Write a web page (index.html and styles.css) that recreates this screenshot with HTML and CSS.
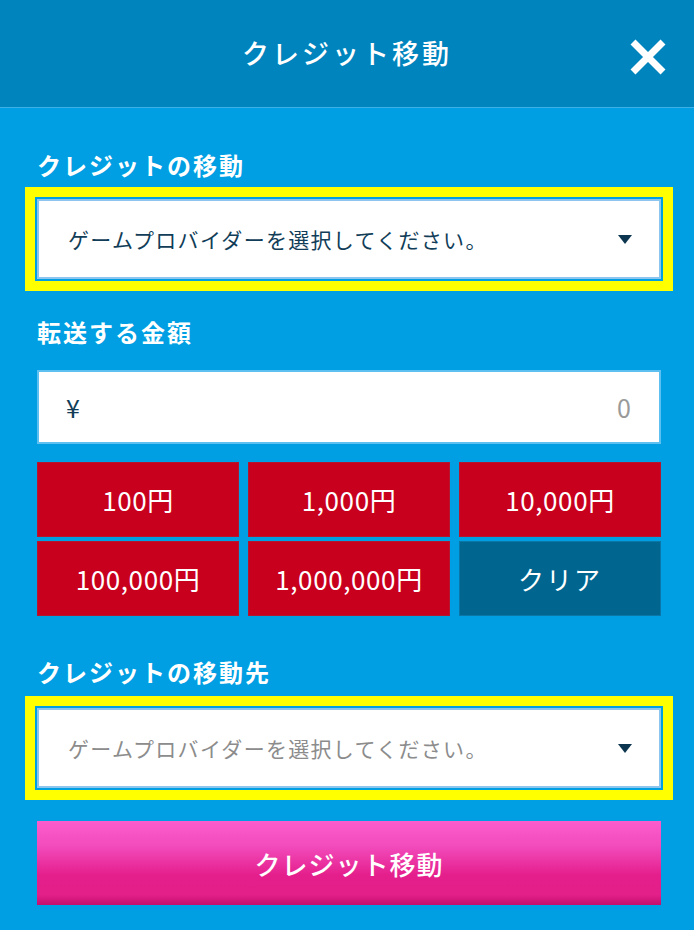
FILE: index.html
```html
<!DOCTYPE html>
<html lang="ja">
<head>
<meta charset="utf-8">
<title>クレジット移動</title>
<link rel="stylesheet" href="styles.css">
</head>
<body>
<header class="header">
  <h1 class="title">クレジット移動</h1>
  <button class="close" aria-label="閉じる">
    <svg width="38" height="38" viewBox="0 0 38 38"><path d="M4 4 L34 34 M34 4 L4 34" stroke="#fff" stroke-width="7" stroke-linecap="butt"/></svg>
  </button>
</header>
<main class="content">
  <div class="label label-first">クレジットの移動</div>
  <div class="select highlight">
    <span class="select-text">ゲームプロバイダーを選択してください。</span>
    <span class="arrow"></span>
  </div>

  <div class="label label-amount">転送する金額</div>
  <div class="amount">
    <span class="yen">¥</span>
    <span class="value">0</span>
  </div>

  <div class="grid">
    <button class="chip">100円</button>
    <button class="chip">1,000円</button>
    <button class="chip">10,000円</button>
    <button class="chip">100,000円</button>
    <button class="chip">1,000,000円</button>
    <button class="chip clear">クリア</button>
  </div>

  <div class="label label-dest">クレジットの移動先</div>
  <div class="select highlight">
    <span class="select-text placeholder">ゲームプロバイダーを選択してください。</span>
    <span class="arrow"></span>
  </div>

  <button class="submit">クレジット移動</button>
</main>
</body>
</html>
```
FILE: styles.css
```css
* { box-sizing: border-box; }
html, body {
  margin: 0;
  padding: 0;
}
body {
  background: #009fe3;
  font-family: "Noto Sans CJK JP", "Noto Sans", sans-serif;
  color: #fff;
  width: 694px;
  height: 930px;
  overflow: hidden;
}
.header {
  height: 108px;
  background: #0084bd;
  border-bottom: 1px solid #3cb1e8;
  display: flex;
  align-items: center;
  justify-content: center;
  position: relative;
}
.title {
  margin: 0;
  font-size: 27px;
  font-weight: 500;
  letter-spacing: 3px;
  line-height: 1;
  padding-bottom: 2px;
}
.close {
  position: absolute;
  right: 27px;
  top: 38px;
  width: 38px;
  height: 38px;
  padding: 0;
  border: 0;
  background: none;
  display: block;
}
.close svg { display: block; }
.content {
  padding: 40px 33px 0 37px;
  display: flex;
  flex-direction: column;
}
.label {
  font-size: 24px;
  font-weight: 700;
  letter-spacing: 2px;
  line-height: 34px;
}
.label-first { margin-bottom: 17px; }
.label-amount { margin-top: 36px; margin-bottom: 21px; }
.label-dest { margin-top: 39px; margin-bottom: 19px; }
.select {
  height: 80px;
  background: #fff;
  border: 2px solid #8cc6ef;
  display: flex;
  align-items: center;
  justify-content: space-between;
  padding: 0 27px 0 29px;
}
.highlight {
  outline: 10px solid #ffff00;
  outline-offset: 2px;
}
.select-text {
  font-size: 21px;
  color: #113d58;
  letter-spacing: 1.3px;
}
.select-text.placeholder { color: #8c8c8c; }
.arrow {
  width: 0;
  height: 0;
  border-left: 7px solid transparent;
  border-right: 7px solid transparent;
  border-top: 9px solid #0c3650;
}
.amount {
  height: 74px;
  background: #fff;
  border: 2px solid #5dc0f0;
  display: flex;
  align-items: center;
  justify-content: space-between;
  padding: 0 28px 0 27px;
  font-size: 25px;
}
.yen { color: #113d58; }
.value { color: #9a9a9a; }
.grid {
  margin-top: 18px;
  display: grid;
  grid-template-columns: repeat(3, 1fr);
  column-gap: 9px;
  row-gap: 4px;
}
.chip {
  height: 75px;
  background: #c9001d;
  border: 1px solid #b3172f;
  color: #fff;
  font-family: inherit;
  font-size: 26px;
  padding: 0;
  letter-spacing: 0.6px;
}
.chip.clear {
  background: #006690;
  border-color: #0a77a8;
  letter-spacing: 2px;
}
.submit {
  margin-top: 33px;
  height: 84px;
  border: 0;
  color: #fff;
  font-family: inherit;
  font-size: 26px;
  font-weight: 500;
  letter-spacing: 1px;
  background: linear-gradient(to bottom, #fc5ccd 0%, #f24bbc 30%, #e41e8b 65%, #e31f89 88%, #c2106d 100%);
}
```
